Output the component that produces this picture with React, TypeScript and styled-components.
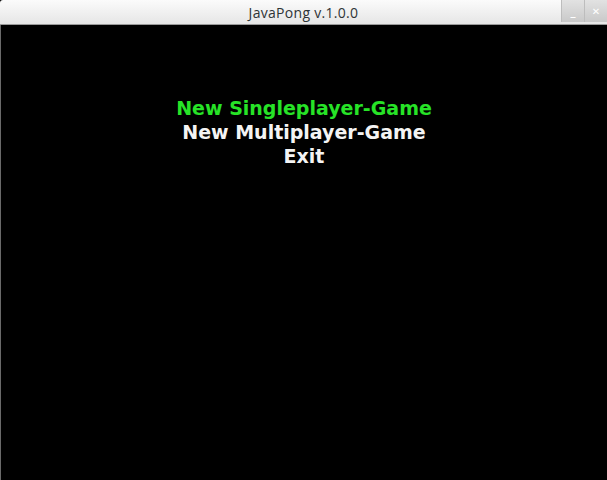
import React from 'react'
import styled, { createGlobalStyle } from 'styled-components'

const GlobalStyle = createGlobalStyle`
  html, body {
    margin: 0;
    padding: 0;
    background: #000;
  }
`

const Window = styled.div`
  width: 607px;
  height: 480px;
  display: flex;
  flex-direction: column;
  background: #000;
  overflow: hidden;
`

const TitleBar = styled.div`
  position: relative;
  height: 24px;
  flex: 0 0 24px;
  display: flex;
  align-items: center;
  justify-content: center;
  background: linear-gradient(#fbfbfb, #e6e6e6);
  border-bottom: 1px solid #9a9a9a;
  border-radius: 3px 3px 0 0;
`

const Title = styled.span`
  font-family: 'Open Sans', 'DejaVu Sans', sans-serif;
  font-size: 14px;
  color: #2e3436;
  letter-spacing: 0.3px;
`

const Buttons = styled.div`
  position: absolute;
  right: 0;
  top: 0;
  display: flex;
  height: 23px;
`

const WinButton = styled.div`
  width: 22px;
  height: 22px;
  display: flex;
  align-items: center;
  justify-content: center;
  background: linear-gradient(#e2e2e2, #c9c9c9);
  border-left: 1px solid #bdbdbd;
  color: #fff;
  font-family: 'DejaVu Sans', sans-serif;
  font-size: 10px;
  font-weight: bold;
`

const Canvas = styled.div`
  flex: 1;
  border-left: 1px solid #6a6a6a;
  background: #000;
  display: flex;
  flex-direction: column;
  align-items: center;
  padding-top: 71px;
`

const MenuItem = styled.div<{ $active?: boolean }>`
  font-family: 'DejaVu Sans', sans-serif;
  font-weight: bold;
  font-size: 19px;
  line-height: 24px;
  color: ${(p) => (p.$active ? '#27e327' : '#f4f4f4')};
`

export default function App() {
  return (
    <>
      <GlobalStyle />
      <Window>
        <TitleBar>
          <Title>JavaPong v.1.0.0</Title>
          <Buttons>
            <WinButton>_</WinButton>
            <WinButton>✕</WinButton>
          </Buttons>
        </TitleBar>
        <Canvas>
          <MenuItem $active>New Singleplayer-Game</MenuItem>
          <MenuItem>New Multiplayer-Game</MenuItem>
          <MenuItem>Exit</MenuItem>
        </Canvas>
      </Window>
    </>
  )
}
